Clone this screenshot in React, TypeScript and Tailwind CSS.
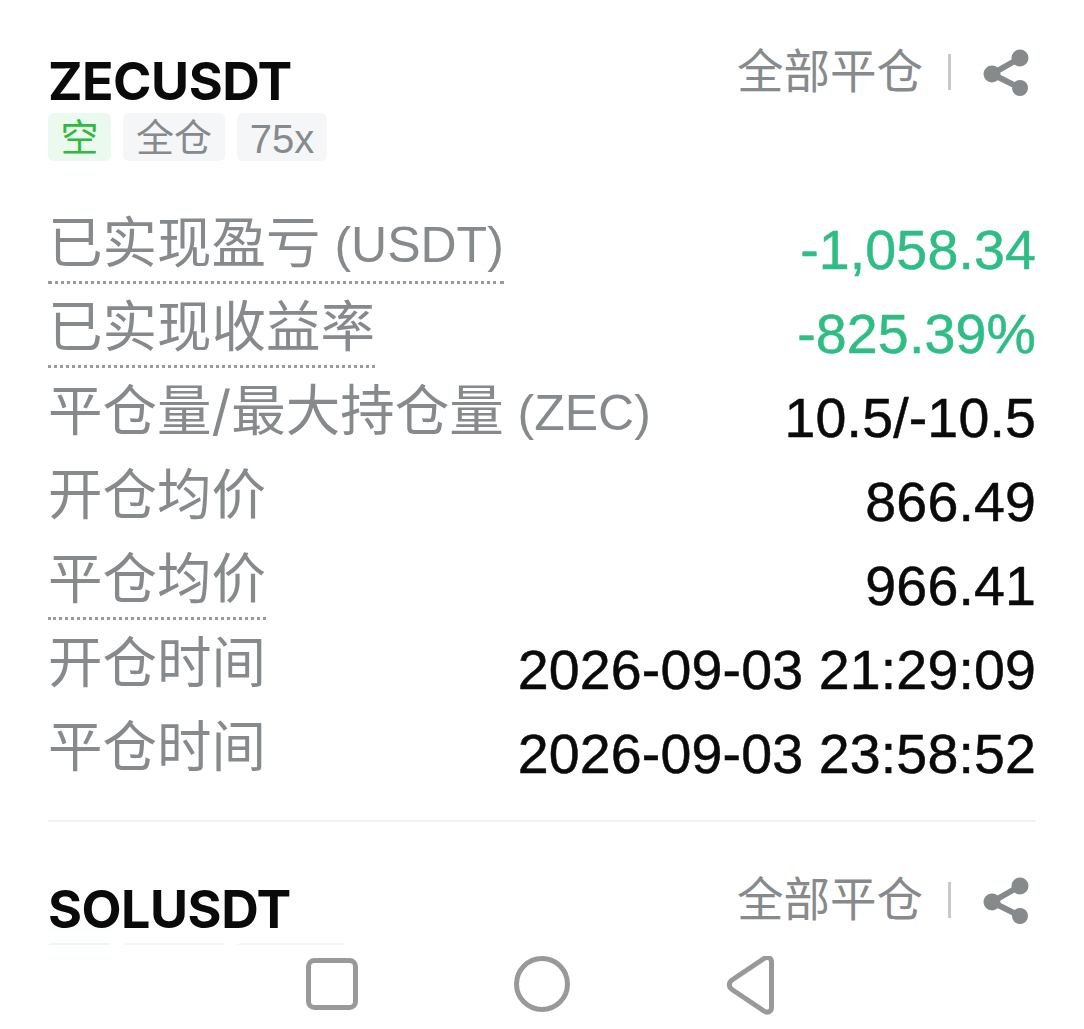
import React from 'react'

const FONT = "font-['Inter','Noto_Sans_CJK_SC',sans-serif]"
const LATIN = "font-['Liberation_Sans','Noto_Sans_CJK_SC',sans-serif]"

const rows = [
  { label: '已实现盈亏', unit: ' (USDT)', value: '-1,058.34', dotted: true, green: true },
  { label: '已实现收益率', unit: '', value: '-825.39%', dotted: true, green: true },
  { label: '平仓量/最大持仓量', unit: ' (ZEC)', value: '10.5/-10.5', dotted: false, green: false },
  { label: '开仓均价', unit: '', value: '866.49', dotted: false, green: false },
  { label: '平仓均价', unit: '', value: '966.41', dotted: true, green: false },
  { label: '开仓时间', unit: '', value: '2026-09-03 21:29:09', dotted: false, green: false },
  { label: '平仓时间', unit: '', value: '2026-09-03 23:58:52', dotted: false, green: false },
]

const ShareIcon = () => (
  <svg width="48" height="48" viewBox="0 0 48 48" fill="#868a8c" stroke="#868a8c">
    <circle cx="38" cy="10" r="8.5" stroke="none" />
    <circle cx="10" cy="26" r="8.5" stroke="none" />
    <circle cx="38" cy="40" r="8" stroke="none" />
    <path d="M38 10 10 26l28 14" fill="none" strokeWidth="6" />
  </svg>
)

const CardHeader = ({ symbol }: { symbol: string }) => (
  <div className="flex items-start justify-between">
    <div className="mt-[9px] text-[52px] leading-[50px] font-bold tracking-[-0.5px] text-[#0a0a0a]">{symbol}</div>
    <div className="flex items-center">
      <span className="-mt-[3px] text-[46.5px] leading-[50px] text-[#868a8c]">全部平仓</span>
      <span className="ml-[25px] h-[36px] w-[3px] bg-[#c8cacb]" />
      <span className="ml-[31px] mr-[6px]">
        <ShareIcon />
      </span>
    </div>
  </div>
)

export default function App() {
  return (
    <div className={`relative h-[1029px] w-[1084px] overflow-hidden bg-white ${FONT}`}>
      <div className="px-[48px] pt-[48px]">
        <CardHeader symbol="ZECUSDT" />
        <div className="mt-[6px] flex gap-[12px] text-[38px] leading-[48px] text-[#868a8c]">
          <span className="flex h-[48px] w-[63px] items-center justify-center rounded-[6px] bg-[#ebf9ee] text-[#2dbb3c]">空</span>
          <span className="flex h-[48px] w-[102px] items-center justify-center rounded-[6px] bg-[#f5f6f7]">全仓</span>
          <span className={`flex h-[48px] w-[90px] items-center justify-center rounded-[6px] bg-[#f5f6f7] pt-[3px] text-[40px] ${LATIN}`}>75x</span>
        </div>

        <div className="mt-[47px] flex flex-col">
          {rows.map((row) => (
            <div key={row.label} className="flex h-[84px] items-start justify-between">
              <span
                className={`h-[76px] text-[54.5px] leading-[68px] text-[#868a8c] ${
                  row.dotted ? 'border-b-[3px] border-dotted border-[#999c9e]' : ''
                }`}
              >
                {row.label}
                <span className={`text-[50px] ${LATIN}`}>{row.unit}</span>
              </span>
              <span
                className={`mt-[7px] text-[55.5px] leading-[70px] tracking-[0.15px] [-webkit-text-stroke:0.5px] ${LATIN} ${
                  row.green ? 'text-[#2ebd85]' : 'text-[#0a0a0a]'
                }`}
              >
                {row.value}
              </span>
            </div>
          ))}
        </div>

        <div className="mt-[24px] h-[2px] bg-[#f1f2f3]" />

        <div className="mt-[54px]">
          <CardHeader symbol="SOLUSDT" />
        </div>
      </div>

      {/* second card's tags, cut off by the nav bar */}
      <div className="absolute left-[48px] top-[943px] flex gap-[12px]">
        <span className="h-[8px] w-[63px] rounded-[6px] bg-[#e9f8f4]" />
        <span className="h-[8px] w-[102px] rounded-[6px] bg-[#f4f5f6]" />
        <span className="h-[8px] w-[108px] rounded-[6px] bg-[#f4f5f6]" />
      </div>

      <div className="absolute bottom-0 left-0 flex h-[84px] w-full items-start bg-white pl-[306px] pt-[11px]">
        <svg width="472" height="64" viewBox="0 0 472 64" fill="none" stroke="#999999" strokeWidth="5">
          <rect x="2.5" y="4.5" width="47" height="47" rx="6" />
          <circle cx="236" cy="28" r="25.5" />
          <path d="M465.5 6c0-4-4-6-7.500-3.500L426 24c-3.500 2.500-3.500 7 0 9.500L458 55c3.500 2.500 7.500.5 7.500-3.500Z" strokeLinejoin="round" />
        </svg>
      </div>
    </div>
  )
}
